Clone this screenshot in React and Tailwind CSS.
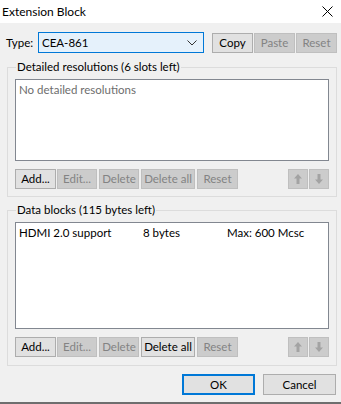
import React from "react";

const font = { fontFamily: 'Lato, "Liberation Sans", sans-serif' };

function Btn({ children, w, disabled, className = "" }) {
  return (
    <div
      className={
        "h-[20px] flex items-center justify-center border text-[11.5px] leading-none whitespace-nowrap shrink-0 " +
        (disabled
          ? "bg-[#cccccc] border-[#bfbfbf] text-[#838383] "
          : "bg-[#e1e1e1] border-[#adadad] text-black ") +
        className
      }
      style={{ width: w }}
    >
      {children}
    </div>
  );
}

function Arrow({ up }) {
  return (
    <div className="w-[20px] h-[20px] bg-[#cccccc] border border-[#bfbfbf] flex items-center justify-center shrink-0">
      <svg width="8" height="10" viewBox="0 0 8 10">
        {up ? (
          <path d="M4 0 L8 4.5 L5.5 4.5 L5.5 10 L2.5 10 L2.5 4.5 L0 4.5 Z" fill="#a3a3a3" />
        ) : (
          <path d="M4 10 L8 5.5 L5.5 5.5 L5.5 0 L2.5 0 L2.5 5.5 L0 5.5 Z" fill="#a3a3a3" />
        )}
      </svg>
    </div>
  );
}

function ButtonRow({ deleteAllEnabled }) {
  return (
    <div className="flex items-center mt-[8px]">
      <Btn w={41}>Add...</Btn>
      <Btn w={40} disabled className="ml-[1px]">Edit...</Btn>
      <Btn w={40} disabled className="ml-[2px]">Delete</Btn>
      <Btn w={54} disabled={!deleteAllEnabled} className="ml-[2px]">Delete all</Btn>
      <Btn w={41} disabled className="ml-[2px]">Reset</Btn>
      <div className="flex-1" />
      <Arrow up />
      <div className="ml-[1px]">
        <Arrow />
      </div>
    </div>
  );
}

export default function App() {
  return (
    <div
      className="w-[341px] h-[404px] bg-[#f0f0f0] flex flex-col text-[11.5px] text-black border-b-2 border-[#6e6e6e]"
      style={font}
    >
      <div className="h-[23px] bg-white flex items-center justify-between pl-[2px] pr-[8px] shrink-0">
        <span className="text-[12px]">Extension Block</span>
        <svg width="11" height="11" viewBox="0 0 11 11">
          <path d="M0.5 0.5 L10.5 10.5 M10.5 0.5 L0.5 10.5" stroke="#000" strokeWidth="1" />
        </svg>
      </div>

      <div className="flex items-center mt-[9px] pl-[6px]">
        <span className="w-[32px]">Type:</span>
        <div className="w-[166px] h-[21px] bg-[#e5f1fb] border border-[#0078d7] flex items-center justify-between pl-[3px] pr-[6px]">
          <span>CEA-861</span>
          <svg width="10" height="6" viewBox="0 0 10 6">
            <path d="M0.5 0.5 L5 5 L9.5 0.5" stroke="#333" strokeWidth="1" fill="none" />
          </svg>
        </div>
        <Btn w={41} className="ml-[8px]">Copy</Btn>
        <Btn w={41} disabled className="ml-[1px]">Paste</Btn>
        <Btn w={41} disabled className="ml-[1px]">Reset</Btn>
      </div>

      <fieldset className="mx-[7px] mt-[6px] border border-[#dcdcdc] px-[7px] pb-[7px] w-[330px]">
        <legend className="ml-[1px] px-[1px] leading-[16px]">Detailed resolutions (6 slots left)</legend>
        <div className="mt-[4px] h-[82px] bg-white border border-[#828790] pl-[3px] pt-[1px] text-[#6d6d6d]">
          No detailed resolutions
        </div>
        <ButtonRow />
      </fieldset>

      <fieldset className="mx-[7px] mt-[5px] border border-[#dcdcdc] px-[7px] pb-[8px] w-[330px]">
        <legend className="ml-[1px] px-[1px] leading-[16px]">Data blocks (115 bytes left)</legend>
        <div className="mt-[4px] h-[107px] bg-white border border-[#828790] pl-[3px] pt-[1px] flex items-start">
          <span className="w-[124px]">HDMI 2.0 support</span>
          <span className="w-[84px]">8 bytes</span>
          <span>Max: 600 Mcsc</span>
        </div>
        <ButtonRow deleteAllEnabled />
      </fieldset>

      <div className="flex justify-end gap-[8px] pr-[5px] mt-[8px]">
        <div className="w-[73px] h-[21px] border-2 border-[#0078d7] bg-[#e1e1e1] flex items-center justify-center">
          OK
        </div>
        <div className="w-[73px] h-[21px] border border-[#adadad] bg-[#e1e1e1] flex items-center justify-center">
          Cancel
        </div>
      </div>
    </div>
  );
}
